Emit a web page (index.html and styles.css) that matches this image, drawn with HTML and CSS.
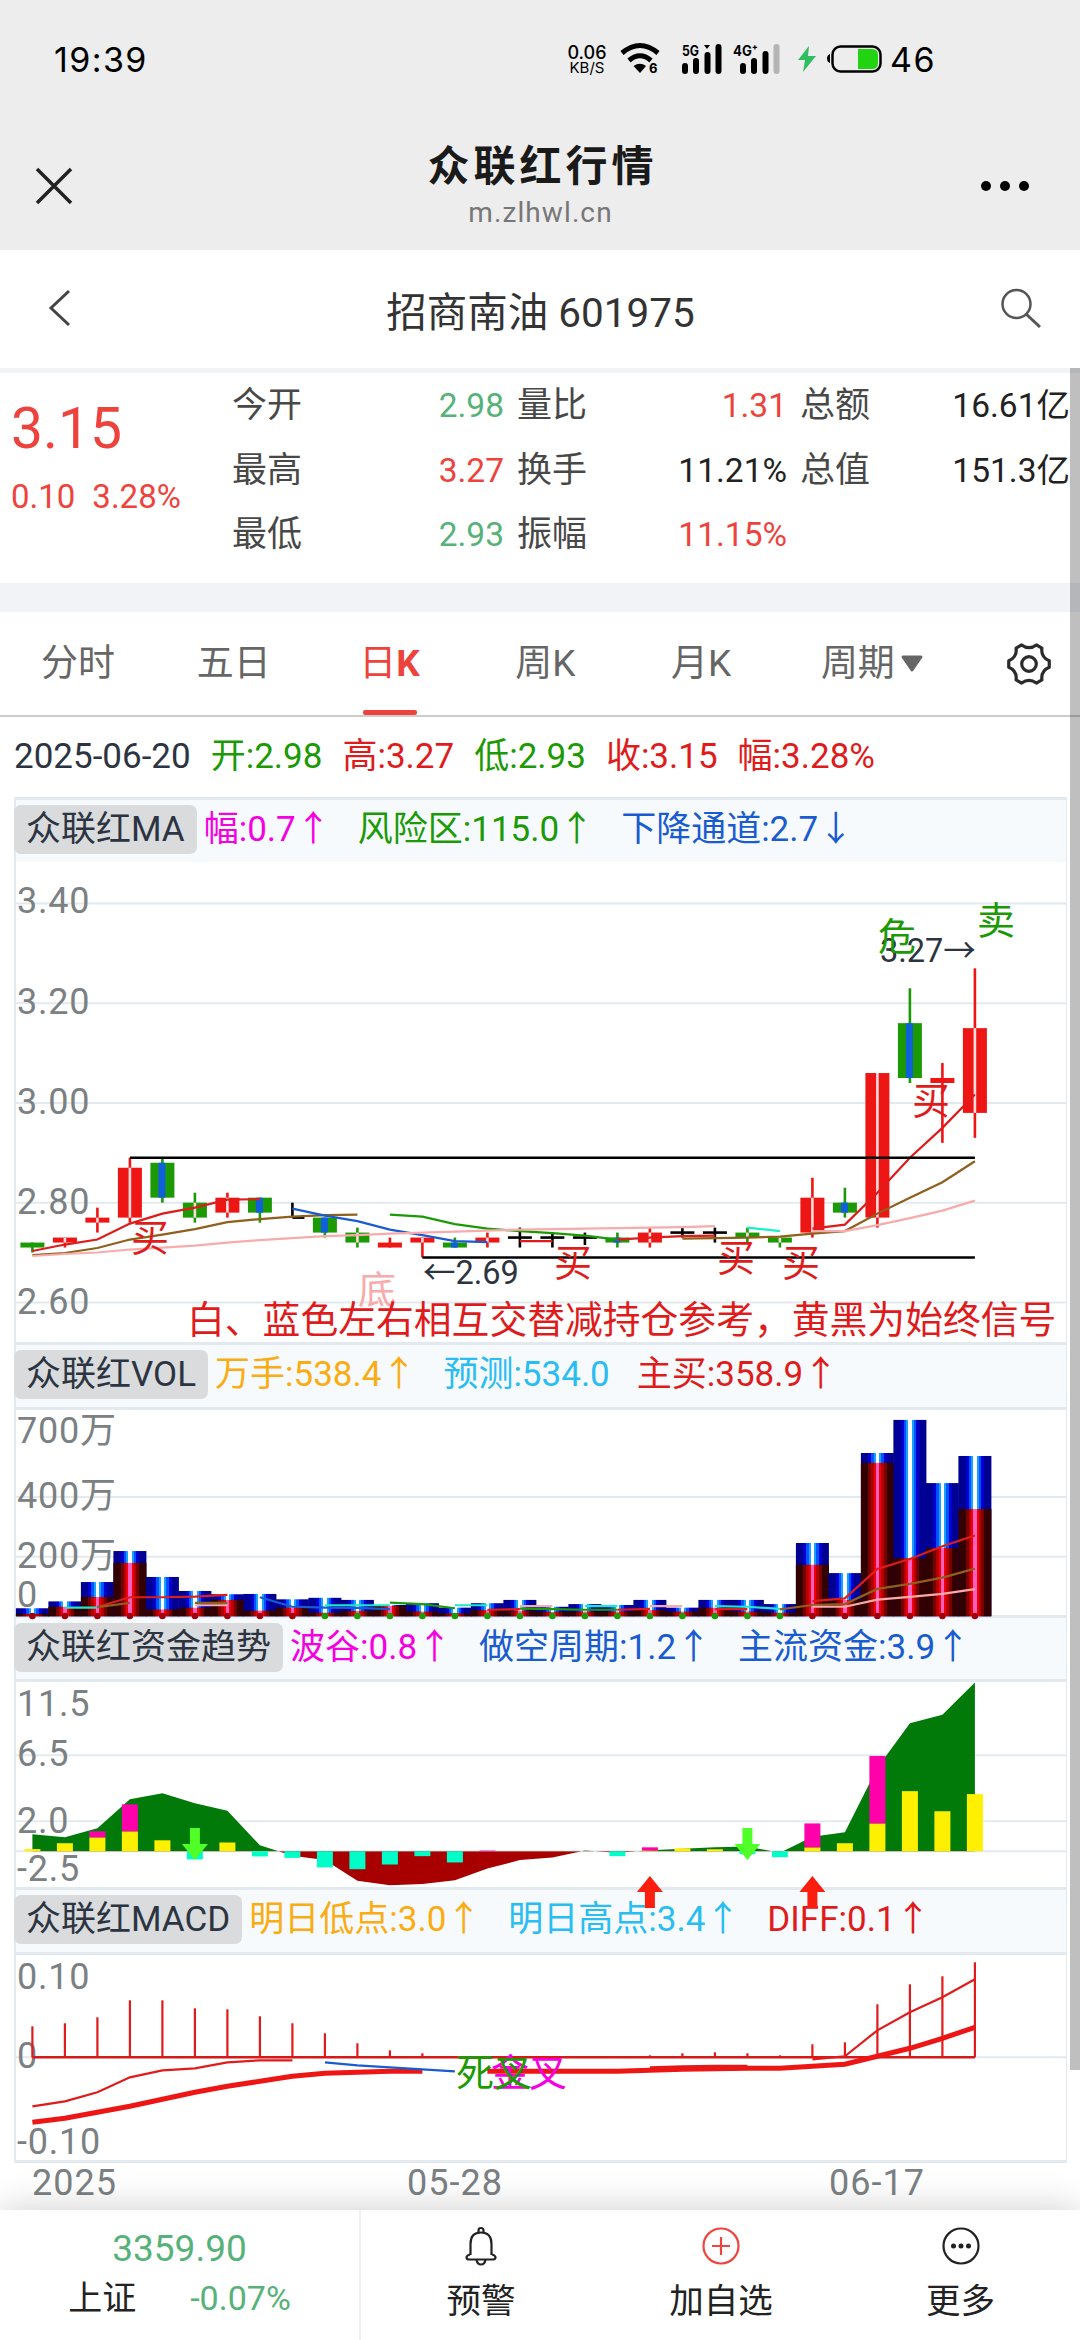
FILE: index.html
```html
<!DOCTYPE html>
<html lang="zh-CN">
<head>
  <meta charset="UTF-8">
  <title>众联红行情</title>
  <link rel="stylesheet" href="styles.css">
</head>
<body>
  <header class="app-header">
    <div class="status-bar">
      <span class="clock">19:39</span>
      <div class="net-speed"><b>0.06</b><span>KB/S</span></div>
      <svg class="wifi" width="40" height="32" viewBox="0 0 40 32">
        <path d="M2 10Q20 -5 38 10" fill="none" stroke="#000" stroke-width="5"/>
        <path d="M9 17.500Q20 8 31 17.500" fill="none" stroke="#000" stroke-width="5"/>
        <path d="M13.500 23Q20 18.500 26 23L20 30Z"/>
        <text x="29" y="30" font-size="13" font-weight="bold">6</text>
      </svg>
      <svg class="signal" width="40" height="32" viewBox="0 0 40 32">
        <text x="0" y="13" font-size="14" font-weight="bold" textLength="17" lengthAdjust="spacingAndGlyphs">5G</text>
        <path d="M22 2h6l-3 4z"/>
        <path d="M3 23v5M14 18v10M25.500 12v16M36.500 4v24" stroke="#000" stroke-width="6" stroke-linecap="round"/>
      </svg>
      <svg class="signal-4g" width="48" height="32" viewBox="0 0 48 32">
        <text x="0" y="13" font-size="14" font-weight="bold" textLength="25" lengthAdjust="spacingAndGlyphs">4G⁺</text>
        <path d="M10 23v5M21 18v10M32.500 11v17" stroke="#000" stroke-width="6" stroke-linecap="round"/>
        <path d="M43.500 4v24" stroke="#b4b4b4" stroke-width="6" stroke-linecap="round"/>
      </svg>
      <svg class="bolt" width="20" height="28" viewBox="0 0 20 28">
        <path d="M12 1L1 15h7L6 27 19 11h-8z" fill="#2dbe60"/>
      </svg>
      <svg class="battery" width="56" height="30" viewBox="0 0 56 30">
        <path d="M3 10v9Q0 18 0 14.500T3 10z"/>
        <rect x="5.500" y="2.500" width="48" height="25" rx="8" fill="none" stroke="#000" stroke-width="2.500"/>
        <path d="M31 5h14q6 0 6 6v8q0 6-6 6H31z" fill="#22d312"/>
      </svg>
      <span class="battery-level">46</span>
    </div>
    <div class="webview-bar">
      <svg width="40" height="40" viewBox="0 0 40 40"><path d="M3 3L37 37M37 3L3 37" stroke="#222" stroke-width="3.500"/></svg>
      <div class="webview-title">
        <h1>众联红行情</h1>
        <p>m.zlhwl.cn</p>
      </div>
      <svg width="50" height="12" viewBox="0 0 50 12"><circle cx="6" cy="6" r="5"/><circle cx="25" cy="6" r="5"/><circle cx="44" cy="6" r="5"/></svg>
    </div>
  </header>

  <nav class="stock-bar">
    <svg width="24" height="40" viewBox="0 0 24 40"><path d="M21 3L3 20L21 37" fill="none" stroke="#444" stroke-width="3"/></svg>
    <h2>招商南油 601975</h2>
    <svg width="42" height="42" viewBox="0 0 42 42"><circle cx="16.500" cy="17" r="14" fill="none" stroke="#555" stroke-width="2.500"/><path d="M26 27L40 40" stroke="#555" stroke-width="3"/></svg>
  </nav>

  <section class="quote">
    <div class="quote-price">
      <strong>3.15</strong>
      <p><span>0.10</span><span>3.28%</span></p>
    </div>
    <div class="quote-grid">
      <div class="cell"><span>今开</span><em class="down">2.98</em></div>
      <div class="cell"><span>量比</span><em class="up">1.31</em></div>
      <div class="cell"><span>总额</span><em>16.61亿</em></div>
      <div class="cell"><span>最高</span><em class="up">3.27</em></div>
      <div class="cell"><span>换手</span><em>11.21%</em></div>
      <div class="cell"><span>总值</span><em>151.3亿</em></div>
      <div class="cell"><span>最低</span><em class="down">2.93</em></div>
      <div class="cell"><span>振幅</span><em class="up">11.15%</em></div>
    </div>
  </section>

  <nav class="tabs">
    <span class="tab">分时</span>
    <span class="tab">五日</span>
    <span class="tab active">日<b>K</b></span>
    <span class="tab">周K</span>
    <span class="tab">月K</span>
    <span class="tab period">周期<svg width="24" height="18" viewBox="0 0 24 18"><path d="M3 2h18L12 15z" fill="#666" stroke="#666" stroke-width="3" stroke-linejoin="round"/></svg></span>
    <span class="tab settings">
      <svg width="44" height="44" viewBox="0 0 44 44" fill="none" stroke="#2b2b2b" stroke-width="3.200" stroke-linejoin="round">
        <path d="M42.250 18.800V25.200Q33.700 28.750 34.900 37.900L29.350 41.100Q22 35.500 14.650 41.100L9.100 37.900Q10.300 28.750 1.750 25.200V18.800Q10.300 15.250 9.100 6.100L14.650 2.900Q22 8.500 29.350 2.900L34.900 6.100Q33.700 15.250 42.250 18.800Z"/>
        <circle cx="22" cy="22" r="7.300"/>
      </svg>
    </span>
  </nav>

  <div class="ohlc">
    <span>2025-06-20</span>
    <span class="green">开:2.98</span>
    <span class="red">高:3.27</span>
    <span class="green">低:2.93</span>
    <span class="red">收:3.15</span>
    <span class="red">幅:3.28%</span>
  </div>

  <main class="charts">
    <section class="panel panel-ma">
      <div class="panel-head">
        <span class="tag">众联红MA</span>
        <span class="magenta">幅:0.7↑</span>
        <span class="green">风险区:115.0↑</span>
        <span class="blue">下降通道:2.7↓</span>
      </div>
      <svg class="plot" id="ma" width="1050" height="480"></svg>
    </section>
    <section class="panel">
      <div class="panel-head">
        <span class="tag">众联红VOL</span>
        <span class="orange">万手:538.4↑</span>
        <span class="sky">预测:534.0</span>
        <span class="red">主买:358.9↑</span>
      </div>
      <svg class="plot" id="vol" width="1050" height="205"></svg>
    </section>
    <section class="panel panel-fund">
      <div class="panel-head">
        <span class="tag">众联红资金趋势</span>
        <span class="magenta">波谷:0.8↑</span>
        <span class="blue">做空周期:1.2↑</span>
        <span class="blue">主流资金:3.9↑</span>
      </div>
      <svg class="plot" id="fund" width="1050" height="205"></svg>
    </section>
    <section class="panel panel-macd">
      <div class="panel-head">
        <span class="tag">众联红MACD</span>
        <span class="orange">明日低点:3.0↑</span>
        <span class="sky">明日高点:3.4↑</span>
        <span class="red">DIFF:0.1↑</span>
      </div>
      <svg class="plot" id="macd" width="1050" height="205"></svg>
    </section>
    <div class="dates"><span>2025</span><span>05-28</span><span>06-17</span></div>
    <div class="scrollbar"></div>
  </main>

  <footer class="bottom-bar">
    <div class="index">
      <span class="index-value">3359.90</span>
      <p><span>上证</span><span class="down">-0.07%</span></p>
    </div>
    <div class="action">
      <svg width="40" height="40" viewBox="0 0 40 40" fill="none" stroke="#222" stroke-width="2.200">
        <path d="M9.500 29V18C9.500 10 13 6.500 20 6.500S30.500 10 30.500 18V29"/>
        <path d="M9 28.500Q5.500 29.500 5.500 31.500T8.500 33.500H31.500Q34.500 33.500 34.500 31.500T31 28.500M15.500 34Q16.500 38.500 20 38.500T24.500 34M17.500 6V4.500Q17.500 2 20 2T22.500 4.500V6"/>
      </svg>
      <span>预警</span>
    </div>
    <div class="action">
      <svg width="40" height="40" viewBox="0 0 40 40" fill="none" stroke="#ee4540" stroke-width="2.200"><circle cx="20" cy="20" r="17.500"/><path d="M11 20H29M20 11V29"/></svg>
      <span>加自选</span>
    </div>
    <div class="action">
      <svg width="40" height="40" viewBox="0 0 40 40" fill="none" stroke="#222" stroke-width="2.200"><circle cx="20" cy="20" r="17.500"/><path d="M12.500 20h.01M20 20h.01M27.500 20h.01" stroke-width="5" stroke-linecap="round"/></svg>
      <span>更多</span>
    </div>
  </footer>

  <script src="charts.js"></script>
</body>
</html>
```
FILE: styles.css
```css
* { box-sizing: border-box; }
body {
  margin: 0;
  width: 1080px;
  height: 2340px;
  overflow: hidden;
  display: flex;
  flex-direction: column;
  background: #fff;
  color: #222;
  font-family: Roboto, "Noto Sans CJK SC", sans-serif;
  font-size: 34px;
  line-height: 1;
  font-weight: 400;
}
h1, h2, p { margin: 0; font-weight: 400; }
em { font-style: normal; }
svg { display: block; flex: none; }
.up { color: #ee433c; }
.down { color: #56b278; }
.red { color: #e01b1b; }
.green { color: #1b9a05; }
.blue { color: #1a5cd0; }
.sky { color: #29bdf2; }
.orange { color: #fbac12; }
.magenta { color: #f500e0; }

/* status + webview header */
.app-header {
  height: 250px;
  background: #ededed;
  flex: none;
}
.status-bar {
  height: 120px;
  padding: 0 0 0 54px;
  display: flex;
  align-items: center;
  color: #000;
  font-family: Inter, Roboto, sans-serif;
}
.status-bar svg { margin-bottom: 2px; overflow: visible; }
.clock { width: 512px; font-size: 34px; letter-spacing: 1.4px; }
.net-speed {
  width: 42px;
  display: flex;
  flex-direction: column;
  align-items: center;
  font-size: 15px;
  line-height: 15px;
}
.net-speed b { font-size: 18px; font-weight: 500; }
.wifi { margin-left: 12px; }
.signal { margin-left: 22px; }
.signal-4g { margin-left: 11px; }
.bolt { margin-left: 16px; }
.battery { margin-left: 10px; }
.battery-level { margin-left: 7px; font-size: 34px; letter-spacing: 1.5px; }
.webview-bar {
  height: 130px;
  padding: 0 50px 0 34px;
  display: flex;
  justify-content: space-between;
}
.webview-bar > svg:first-child { margin-top: 46px; }
.webview-bar > svg:last-child { margin-top: 60px; }
.webview-title { text-align: center; padding: 25px 0 0 27px; }
.webview-title h1 {
  font-size: 42px;
  line-height: 44px;
  font-weight: 700;
  letter-spacing: 4px;
  color: #1a1a1a;
  margin-right: -4px;
}
.webview-title p {
  margin-top: 8px;
  font-size: 28px;
  line-height: 32px;
  letter-spacing: 1.1px;
  color: #777;
}

.stock-bar {
  height: 118px;
  flex: none;
  padding: 0 38px 0 48px;
  display: flex;
  justify-content: space-between;
  align-items: center;
}
.stock-bar h2 { font-size: 40.5px; padding: 8px 0 0 9px; color: #333; }
.stock-bar svg { margin-bottom: 3px; }

.quote {
  height: 244px;
  flex: none;
  display: flex;
  border-top: 5px solid #f2f3f7;
  border-bottom: 29px solid #f2f3f7;
}
.quote-price { width: 232px; padding: 24px 0 0 11px; color: #ee433c; }
.quote-price strong { display: block; font-size: 57px; line-height: 64px; font-weight: 400; }
.quote-price p { margin-top: 19px; display: flex; gap: 17px; font-size: 33px; }
.quote-grid {
  flex: 1;
  padding: 1px 0 0;
  display: grid;
  grid-template-columns: 272px 270px 270px;
  column-gap: 13px;
  grid-auto-rows: 64.5px;
}
.cell { display: flex; justify-content: space-between; line-height: 64px; font-size: 33.5px; }
.cell span { color: #484848; font-size: 35px; }

.tabs {
  height: 105px;
  flex: none;
  display: grid;
  grid-template-columns: repeat(7, 155.8px);
  border-bottom: 2px solid #ccc;
  color: #666;
  font-size: 37px;
}
.tab { display: flex; justify-content: center; align-items: center; position: relative; }
.tab.active { color: #ee433c; }
.tab.active::after {
  content: "";
  position: absolute;
  left: 51px;
  bottom: 0;
  width: 54px;
  height: 5px;
  border-radius: 2px;
  background: #ee433c;
}
.period { padding-left: 31px; }
.period svg { margin-left: 5px; }
.settings { padding-left: 33px; }

.ohlc {
  height: 80px;
  flex: none;
  padding: 0 14px 2px;
  display: flex;
  align-items: center;
  gap: 20px;
  font-size: 35px;
  color: #2c3441;
}

/* indicator panels */
.charts { height: 1413px; flex: none; padding-left: 14px; position: relative; }
.panel {
  width: 1053px;
  border: solid #e3eaef;
  border-width: 3px 1px 0 2px;
}
.panel-macd { border-bottom-width: 3px; }
.panel-head {
  height: 65px;
  padding-top: 5px;
  display: flex;
  align-items: flex-start;
  gap: 27px;
  background: #f6fafd;
  border-bottom: 3px solid #e3eaef;
  font-size: 35px;
  line-height: 49px;
  white-space: nowrap;
}
.panel-ma .panel-head { height: 62px; border-bottom: 0; }
.panel-fund .panel-head { height: 64px; }
.tag {
  height: 49px;
  margin: 0 -20px 0 -2px;
  padding: 0 12px;
  border-radius: 7px;
  background: #d9dbdd;
  color: #2c3441;
}
.plot { position: relative; z-index: 1; overflow: visible; }
.plot text { font-size: 38px; }
.plot .axis { font-size: 36px; letter-spacing: 0.8px; fill: #7b8083; }
.plot .mark { font-size: 32.5px; fill: #2c3441; }
.plot .notice { font-size: 37.8px; }
.dates {
  display: grid;
  grid-template-columns: 375px 422px auto;
  padding: 2px 0 0 18px;
  height: 47px;
  font-size: 36px;
  letter-spacing: 1px;
  color: #7b8083;
}
.scrollbar {
  position: absolute;
  top: -429px;
  right: 0;
  width: 10px;
  height: 1702px;
  background: rgba(0, 0, 0, 0.25);
}

.bottom-bar {
  height: 130px;
  flex: none;
  position: relative;
  display: grid;
  grid-template-columns: 361px 240px 240px 239px;
  background: #fff;
  box-shadow: 0 0 36px rgba(0, 0, 0, 0.2);
}
.index {
  display: flex;
  flex-direction: column;
  align-items: center;
  padding-top: 20px;
  border-right: 2px solid #f1f1f1;
}
.index-value { font-size: 37px; line-height: 38px; color: #56b278; }
.index p { display: flex; gap: 54px; margin-top: 12px; line-height: 36px; }
.action {
  display: flex;
  flex-direction: column;
  align-items: center;
  padding-top: 16px;
}
.action span { margin-top: 17px; line-height: 36px; font-size: 34.5px; }
```
FILE: charts.js
```js
const RED = "#e01b1b";
const GREEN = "#1b9a05";
const BLUE = "#1a5cd0";
const BROWN = "#8f5f1c";
const PINK = "#f7abab";
const CYAN = "#1ee8c8";

const x = i => 16.4 + 32.5 * i;

function rect(cx, w, y1, y2, fill) {
  return `<rect x="${cx - w / 2}" y="${Math.min(y1, y2)}" width="${w}" height="${Math.abs(y2 - y1)}" fill="${fill}"/>`;
}
function hline(y, x1 = 0, x2 = 1050, color = "#e3eaef", w = 2) {
  return `<path d="M${x1} ${y}H${x2}" stroke="${color}" stroke-width="${w}"/>`;
}
// values start at bar index `start`
function line(start, values, y, color, w = 2.2) {
  const pts = values.map((v, k) => `${x(start + k)},${y(v)}`).join(" ");
  return `<polyline points="${pts}" fill="none" stroke="${color}" stroke-width="${w}"/>`;
}
function text(tx, ty, s, attrs) {
  return `<text x="${tx}" y="${ty}" ${attrs}>${s}</text>`;
}
function axis(list) {
  return list.map(([s, y]) => text(1, y, s, 'class="axis"')).join("");
}

// ---- K line: open, close, high, low, inner stripe (w = white, b = blue, k = doji)
const candles = [
  [2.72, 2.71, 2.72, 2.70, ""], [2.72, 2.73, 2.73, 2.71, "w"], [2.76, 2.77, 2.79, 2.74, "w"],
  [2.77, 2.87, 2.89, 2.76, "w"], [2.88, 2.81, 2.89, 2.80, "b"], [2.80, 2.77, 2.82, 2.76, "w"],
  [2.78, 2.81, 2.82, 2.77, "w"], [2.81, 2.78, 2.81, 2.76, "b"], [2.77, 2.77, 2.80, 2.77, "k"],
  [2.77, 2.74, 2.77, 2.73, "b"], [2.74, 2.72, 2.75, 2.71, "w"], [2.71, 2.72, 2.73, 2.71, ""],
  [2.72, 2.73, 2.73, 2.69, "w"], [2.72, 2.71, 2.73, 2.71, "b"], [2.72, 2.73, 2.74, 2.71, "w"],
  [2.73, 2.73, 2.75, 2.71, "k"], [2.73, 2.73, 2.74, 2.71, "k"], [2.73, 2.73, 2.74, 2.715, "k"],
  [2.73, 2.72, 2.74, 2.71, "b"], [2.72, 2.74, 2.75, 2.71, "w"], [2.74, 2.74, 2.75, 2.73, "k"],
  [2.74, 2.74, 2.75, 2.72, "k"], [2.74, 2.73, 2.75, 2.72, "w"], [2.73, 2.72, 2.73, 2.71, "w"],
  [2.74, 2.81, 2.85, 2.73, "w"], [2.80, 2.78, 2.83, 2.77, "b"], [2.77, 3.06, 3.06, 2.75, "w"],
  [3.16, 3.05, 3.23, 3.04, "b"], [3.04, 3.05, 3.08, 2.92, ""], [2.98, 3.15, 3.27, 2.93, "w"]
];

function drawMA() {
  const y = p => 41.5 + (3.4 - p) * 498.6;
  let s = "";
  [3.4, 3.2, 3.0, 2.8, 2.6].forEach(p => s += hline(y(p)));
  s += axis([["3.40", 51], ["3.20", 152], ["3.00", 251.5], ["2.80", 352], ["2.60", 452]]);
  candles.forEach(([o, c, h, l, kind], i) => {
    const color = kind === "k" ? "#000" : c > o ? "#ee1615" : "#1b9a05";
    s += rect(x(i), 2.6, y(h), y(l), color);
    if (kind === "k") {
      s += hline(y(o), i === 8 ? x(i) : x(i) - 12, x(i) + 12, color, 2.6);
      return;
    }
    s += rect(x(i), 24, y(o), y(c), color);
    if (kind === "w") s += rect(x(i), 2.6, y(o), y(c), "#ffdcdc");
    if (kind === "b") s += rect(x(i) - 0.5, 7, y(o), y(c), "#1060dc");
  });
  s += line(0, [2.703, 2.716, 2.726, 2.758, 2.778, 2.79, 2.806, 2.807], y, RED);
  s += line(15, [2.723, 2.723], y, RED);
  s += line(18, [2.726, 2.73, 2.733, 2.734], y, RED);
  s += line(24, [2.748, 2.756, 2.82, 2.89, 2.95, 3.017], y, RED);
  s += line(0, [2.695, 2.699, 2.709, 2.726, 2.736, 2.747, 2.761, 2.767, 2.772, 2.775, 2.776], y, BROWN);
  s += line(20, [2.728, 2.729, 2.73, 2.732, 2.738, 2.743, 2.778, 2.81, 2.841, 2.883], y, BROWN);
  s += line(8, [2.788, 2.774, 2.763, 2.746, 2.735, 2.723, 2.721], y, BLUE);
  s += line(11, [2.776, 2.772, 2.757, 2.748, 2.743, 2.739, 2.734, 2.726], y, GREEN);
  s += line(0, [2.693, 2.697, 2.7, 2.706, 2.71, 2.714, 2.72, 2.725, 2.729, 2.733, 2.735, 2.738,
    2.74, 2.742, 2.744, 2.746, 2.747, 2.748, 2.749, 2.75, 2.751, 2.753], y, PINK);
  s += line(22, [2.75, 2.743], y, "#19f0c8");
  s += line(24, [2.743, 2.743, 2.755, 2.769, 2.784, 2.804], y, PINK);
  s += hline(y(2.89), x(3), x(29), "#000", 2.6);
  s += hline(y(2.69), x(12), x(29), "#000", 2.6);

  s += text(407, 422, "←2.69", 'class="mark"');
  s += text(864, 99.5, "3.27→", 'class="mark"');
  [[115, 389], [538, 414], [701, 409], [766, 414], [896, 252]].forEach(([tx, ty]) => {
    s += text(tx, ty, "买", `fill="${RED}"`);
  });
  s += text(961, 72, "卖", `fill="${GREEN}"`);
  s += text(862, 88, "危", `fill="${GREEN}"`);
  s += text(342, 441, "底", `fill="${PINK}"`);
  s += text(171, 471, "白、蓝色左右相互交替减持仓参考，黄黑为始终信号", `class="notice" fill="${RED}"`);
  document.getElementById("ma").innerHTML = s;
}

// ---- volume (万): total, active buy
const volumes = [
  [27, 8], [50, 32], [115, 65], [219, 179], [132, 23], [85, 29], [74, 55], [75, 19], [57, 29], [62, 12],
  [55, 18], [38, 35], [44, 16], [29, 10], [44, 21], [55, 19], [32, 15], [41, 16], [38, 16], [55, 21],
  [29, 16], [55, 29], [55, 16], [41, 12], [246, 173], [145, 55], [548, 515], [659, 195], [447, 229], [538, 360]
];

function stripes(id, colors) {
  // hard-edged bands, mirrored round the middle
  const edges = [0, 22, 31, 39, 45, 55, 61, 69, 78, 100];
  const all = [...colors, ...colors.slice(0, -1).reverse()];
  const stops = all.map((c, k) =>
    `<stop offset="${edges[k]}%" stop-color="${c}"/><stop offset="${edges[k + 1]}%" stop-color="${c}"/>`).join("");
  return `<linearGradient id="${id}">${stops}</linearGradient>`;
}

function drawVolume() {
  const y = v => 206.3 - v * 0.298;
  let s = "<defs>" + stripes("blueBar", ["#000092", "#0000d2", "#0052ff", "#16a2ff", "#fff"])
    + stripes("redBar", ["#320000", "#780000", "#b40000", "#f0000c", "#ff5fbe"]) + "</defs>";
  s += hline(y(400)) + hline(y(200));
  s += axis([["700万", 33], ["400万", 97.5], ["200万", 157.5], ["0", 197]]);
  volumes.forEach(([total, buy], i) => {
    s += rect(x(i), 33, y(total), y(0), "url(#blueBar)");
    s += rect(x(i), 33, y(buy), y(0), "url(#redBar)");
  });
  s += line(1, [29, 29], y, CYAN);
  s += line(2, [31, 64, 64, 66, 72], y, RED);
  s += line(2, [31, 45], y, BROWN);
  s += line(5, [45, 45], y, BROWN);
  s += line(5, [37, 37], y, PINK);
  s += line(7, [64, 32, 29, 28, 24], y, BLUE);
  s += line(9, [37, 37, 37], y, CYAN);
  s += line(11, [46, 41, 27], y, GREEN);
  s += line(13, [37, 37], y, CYAN);
  s += line(14, [22, 24], y, RED);
  s += line(15, [34, 34], y, PINK);
  s += line(15, [26, 24, 22, 22], y, GREEN);
  s += line(17, [34, 34], y, CYAN);
  s += line(18, [22, 25], y, RED);
  s += line(19, [34, 34], y, PINK);
  s += line(21, [24, 24], y, RED);
  s += line(21, [34, 32, 25], y, CYAN);
  s += line(24, [51, 60, 159, 192, 235, 271], y, RED);
  s += line(23, [23, 38, 41, 92, 109, 130, 160], y, BROWN);
  s += line(24, [32, 32, 56, 65, 75, 91], y, PINK);
  volumes.forEach((v, i) => {
    const color = i > 8 && i < 24 ? GREEN : "#a0000c";
    s += `<circle cx="${x(i)}" cy="206" r="3.300" fill="${color}"/>`;
  });
  document.getElementById("vol").innerHTML = s;
}

// ---- fund trend
const trend = [
  1.16, 0.95, 1.57, 3.55, 3.95, 3.27, 2.77, 0.41, -0.3, -0.6, -2, -2.32, -2.23, -1.98, -1.18, -0.6,
  -0.43, 0.05, -0.1, 0.07, 0.18, 0.27, 0.32, -0.1, 1, 1.3, 5.7, 8.73, 9.3, 11.5
];
// yellow / cyan part, magenta top
const funds = [
  [0.15], [0.55], [0.95, 1.36], [1.36, 3.2], [0.75], [-0.55], [0.6], [-0.35], [-0.45], [-1.1],
  [-1.22], [-0.9], [-0.33], [-0.76], [0, 0.05], [0], [0], [0], [-0.33], [0.05, 0.27],
  [0.2], [0.14], [-0.2], [-0.4], [0.27, 1.9], [0.55], [1.9, 6.5], [4.1], [2.73], [3.9]
];

function drawFund() {
  const y0 = 169.3;
  const y = v => y0 - v * 14.67;
  const area = `${x(0)},${y0} ` + trend.map((v, i) => `${x(i)},${y(v)}`).join(" ") + ` ${x(29)},${y0}`;
  let s = `<defs><clipPath id="above"><rect y="-20" width="1050" height="${y0 + 20}"/></clipPath>
    <clipPath id="below"><rect y="${y0}" width="1050" height="60"/></clipPath></defs>`;
  s += hline(73.3) + hline(139.3) + hline(y0);
  s += axis([["11.5", 33.5], ["6.5", 83.5], ["2.0", 150.5], ["-2.5", 199]]);
  s += `<polygon points="${area}" fill="#027a0a" clip-path="url(#above)"/>`;
  s += `<polygon points="${area}" fill="#a80000" clip-path="url(#below)"/>`;
  funds.forEach(([v, top], i) => {
    s += rect(x(i), 16, y(v), y0, v < 0 ? "#00ffc8" : "#fff000");
    if (top) s += rect(x(i), 16, y(top), y(v), "#ff00aa");
  });
  [5, 22].forEach(i => {
    s += `<path d="M${x(i) - 5} 146h10v16h8l-13 16l-13 -16h8z" fill="#50ff28"/>`;
  });
  [19, 24].forEach(i => {
    s += `<path d="M${x(i) - 5} 226h10v-16h8l-13 -16l-13 16h8z" fill="#fa1e0f"/>`;
  });
  document.getElementById("fund").innerHTML = s;
}

// ---- MACD, heights in px from the zero line
const bars = [31, 34, 40, 57, 57, 49, 48, 41, 34, 24, 14, 7, 4, 0, 0, 0, 0, 0, 0, 2, 4, 5, 4, 2, 13, 15, 53, 73, 81, 95];

function drawMACD() {
  const y0 = 102.3;
  const y = v => y0 - v;
  let s = hline(y0);
  s += axis([["0.10", 33.5], ["0", 113], ["-0.10", 198.5]]);
  bars.forEach((v, i) => { if (v) s += rect(x(i), 2.2, y(v), y0, RED); });
  s += hline(y0, x(0), x(29), "#d61a1a", 2.4);
  s += line(0, [-49, -44, -35, -20, -13, -11, -5, -3, -3], y, RED);
  s += line(0, [-65, -61, -55, -49, -42, -35, -29, -24, -19, -16, -15, -14, -14], y, "#ee1615", 5);
  s += line(9, [-5, -8, -10, -12, -14], y, BLUE);
  s += line(14, [-14, -14, -14, -14, -14, -13, -12, -11.5, -11, -11, -9, -7, 1, 9, 19, 30], y, "#ee1615", 5);
  s += line(19, [-10, -9, -8.5, -8.5], y, RED);
  s += line(24, [-2, 1, 27, 45, 60, 78], y, RED);
  s += text(475, 131, "金叉", 'fill="#f500e0"');
  s += text(440, 131, "死叉", `fill="${GREEN}"`);
  document.getElementById("macd").innerHTML = s;
}

drawMA();
drawVolume();
drawFund();
drawMACD();
```
